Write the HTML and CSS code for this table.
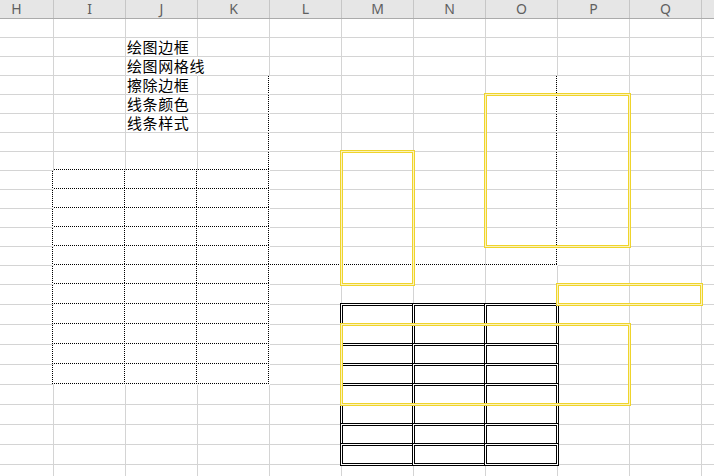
FILE: index.html
```html
<!DOCTYPE html>
<html lang="zh-CN">
<head>
<meta charset="utf-8">
<title>Sheet</title>
<link rel="stylesheet" href="styles.css">
</head>
<body>
<div class="sheet">
  <div class="colheads">
    <div class="ch ch-first">H</div>
    <div class="ch">I</div>
    <div class="ch">J</div>
    <div class="ch">K</div>
    <div class="ch">L</div>
    <div class="ch">M</div>
    <div class="ch">N</div>
    <div class="ch">O</div>
    <div class="ch">P</div>
    <div class="ch">Q</div>
    <div class="ch ch-last"></div>
  </div>
  <div class="grid">
    <div class="cells">
      <!-- r1 -->
      <div></div><div></div><div></div><div></div><div></div><div></div><div></div><div></div><div></div><div></div><div></div>
      <!-- r2 -->
      <div></div><div></div><div class="txt">绘图边框</div><div></div><div></div><div></div><div></div><div></div><div></div><div></div><div></div>
      <!-- r3 -->
      <div></div><div></div><div class="txt nr">绘图网格线</div><div></div><div></div><div></div><div></div><div></div><div></div><div></div><div></div>
      <!-- r4 -->
      <div></div><div></div><div class="txt">擦除边框</div><div class="dr"></div><div></div><div></div><div></div><div class="dr"></div><div></div><div></div><div></div>
      <!-- r5 -->
      <div></div><div></div><div class="txt">线条颜色</div><div class="dr"></div><div></div><div></div><div></div><div class="dr"></div><div></div><div></div><div></div>
      <!-- r6 -->
      <div></div><div></div><div class="txt">线条样式</div><div class="dr"></div><div></div><div></div><div></div><div class="dr"></div><div></div><div></div><div></div>
      <!-- r7 -->
      <div></div><div></div><div></div><div class="dr"></div><div></div><div></div><div></div><div class="dr"></div><div></div><div></div><div></div>
      <!-- r8 -->
      <div></div><div class="db"></div><div class="db"></div><div class="drb"></div><div></div><div></div><div></div><div class="dr"></div><div></div><div></div><div></div>
      <!-- r9 -->
      <div class="dr"></div><div class="drb"></div><div class="drb"></div><div class="drb"></div><div></div><div></div><div></div><div class="dr"></div><div></div><div></div><div></div>
      <!-- r10 -->
      <div class="dr"></div><div class="drb"></div><div class="drb"></div><div class="drb"></div><div></div><div></div><div></div><div class="dr"></div><div></div><div></div><div></div>
      <!-- r11 -->
      <div class="dr"></div><div class="drb"></div><div class="drb"></div><div class="drb"></div><div></div><div></div><div></div><div class="dr"></div><div></div><div></div><div></div>
      <!-- r12 -->
      <div class="dr"></div><div class="drb"></div><div class="drb"></div><div class="drb"></div><div></div><div></div><div></div><div class="dr"></div><div></div><div></div><div></div>
      <!-- r13 -->
      <div class="dr"></div><div class="drb"></div><div class="drb"></div><div class="drb"></div><div class="db"></div><div class="db"></div><div class="db"></div><div class="drb"></div><div></div><div></div><div></div>
      <!-- r14 -->
      <div class="dr"></div><div class="drb"></div><div class="drb"></div><div class="drb"></div><div></div><div></div><div></div><div></div><div></div><div></div><div></div>
      <!-- r15 -->
      <div class="dr"></div><div class="drb"></div><div class="drb"></div><div class="drb"></div><div></div><div></div><div></div><div></div><div></div><div></div><div></div>
      <!-- r16 -->
      <div class="dr"></div><div class="drb"></div><div class="drb"></div><div class="drb"></div><div></div><div></div><div></div><div></div><div></div><div></div><div></div>
      <!-- r17 -->
      <div class="dr"></div><div class="drb"></div><div class="drb"></div><div class="drb"></div><div></div><div></div><div></div><div></div><div></div><div></div><div></div>
      <!-- r18 -->
      <div class="dr"></div><div class="drb"></div><div class="drb"></div><div class="drb"></div><div></div><div></div><div></div><div></div><div></div><div></div><div></div>
      <!-- r19 -->
      <div class="dr"></div><div class="drb"></div><div class="drb"></div><div class="drb"></div><div></div><div></div><div></div><div></div><div></div><div></div><div></div>
      <!-- r20 -->
      <div></div><div></div><div></div><div></div><div></div><div></div><div></div><div></div><div></div><div></div><div></div>
      <!-- r21 -->
      <div></div><div></div><div></div><div></div><div></div><div></div><div></div><div></div><div></div><div></div><div></div>
      <!-- r22 -->
      <div></div><div></div><div></div><div></div><div></div><div></div><div></div><div></div><div></div><div></div><div></div>
      <!-- r23 -->
      <div></div><div></div><div></div><div></div><div></div><div></div><div></div><div></div><div></div><div></div><div></div>
      <!-- r24 -->
      <div></div><div></div><div></div><div></div><div></div><div></div><div></div><div></div><div></div><div></div><div></div>
    </div>
    <div class="marks">
      <div class="dtable">
        <div></div><div></div><div></div>
        <div></div><div></div><div></div>
        <div></div><div></div><div></div>
        <div></div><div></div><div></div>
        <div></div><div></div><div></div>
        <div></div><div></div><div></div>
        <div></div><div></div><div></div>
        <div></div><div></div><div></div>
      </div>
      <div class="ybox y1"></div>
      <div class="ybox y2"></div>
      <div class="ybox y3"></div>
      <div class="ybox y4"></div>
    </div>
  </div>
</div>
</body>
</html>
```

FILE: styles.css
```css
html, body {
  margin: 0;
  padding: 0;
  background: #ffffff;
}

body {
  width: 714px;
  height: 476px;
  overflow: hidden;
}

.sheet {
  display: flex;
  flex-direction: column;
  width: 714px;
  height: 476px;
  overflow: hidden;
}

.colheads {
  display: flex;
  height: 19px;
  box-sizing: border-box;
  border-bottom: 1px solid #ababab;
  background: #e6e6e6;
  flex: none;
}

.ch {
  flex: none;
  width: 72px;
  box-sizing: border-box;
  border-right: 1px solid #c6c6c6;
  text-align: center;
  font-family: "Noto Sans", "Liberation Sans", sans-serif;
  font-size: 14px;
  line-height: 18px;
  color: #606060;
}

.ch-first {
  width: 54px;
  padding-right: 20px;
}

.ch-last {
  width: 12px;
  border-right: 0;
}

.grid {
  display: grid;
  flex: none;
  width: 714px;
  overflow: hidden;
}

.cells,
.marks {
  grid-area: 1 / 1;
  display: grid;
  grid-template-columns: 54px repeat(9, 72px) 12px;
  grid-template-rows: repeat(14, 19px) repeat(10, 20px);
}

.cells > div {
  box-sizing: border-box;
  border-right: 1px solid #d4d4d4;
  border-bottom: 1px solid #d4d4d4;
  min-width: 0;
}

.cells > div:nth-child(11n) {
  border-right: 0;
}

/* dotted (1 on / 1 off) cell borders */
.cells > .dr {
  border-right-color: transparent;
  background: repeating-linear-gradient(to bottom, #000 0 1px, transparent 1px 2px) right top / 1px 100% no-repeat;
}

.cells > .db {
  border-bottom-color: transparent;
  background: repeating-linear-gradient(to right, #000 0 1px, transparent 1px 2px) left bottom / 100% 1px no-repeat;
}

.cells > .drb {
  border-right-color: transparent;
  border-bottom-color: transparent;
  background:
    repeating-linear-gradient(to bottom, #000 0 1px, transparent 1px 2px) right top / 1px 100% no-repeat,
    repeating-linear-gradient(to right, #000 0 1px, transparent 1px 2px) left bottom / 100% 1px no-repeat;
}

.cells > .nr {
  border-right-color: #ffffff;
}

.txt {
  white-space: nowrap;
  overflow: visible;
  padding-left: 1px;
  font-family: "Noto Sans CJK SC", "Noto Sans", sans-serif;
  font-size: 15px;
  letter-spacing: 0.6px;
  line-height: 18px;
  color: #000000;
}

/* double-bordered table M..O */
.dtable {
  grid-column: 6 / 9;
  grid-row: 16 / 24;
  display: grid;
  grid-template-columns: repeat(3, 72px);
  grid-template-rows: repeat(8, 20px);
}

.dtable > div {
  margin: -2px -1px -1px -2px;
  border: 1px solid #000000;
  box-shadow: inset 0 0 0 1px #ffffff, inset 0 0 0 2px #000000;
}

/* yellow double boxes */
.ybox {
  margin: -2px -1px -1px -2px;
  border: 1px solid #efd42c;
  box-shadow: inset 0 0 0 1px #fbf2bd, inset 0 0 0 2px #efd42c;
}

.y1 {
  grid-column: 6 / 7;
  grid-row: 8 / 15;
}

.y2 {
  grid-column: 8 / 10;
  grid-row: 5 / 13;
}

.y3 {
  grid-column: 9 / 11;
  grid-row: 15 / 16;
}

.y4 {
  grid-column: 6 / 10;
  grid-row: 17 / 21;
}
```
